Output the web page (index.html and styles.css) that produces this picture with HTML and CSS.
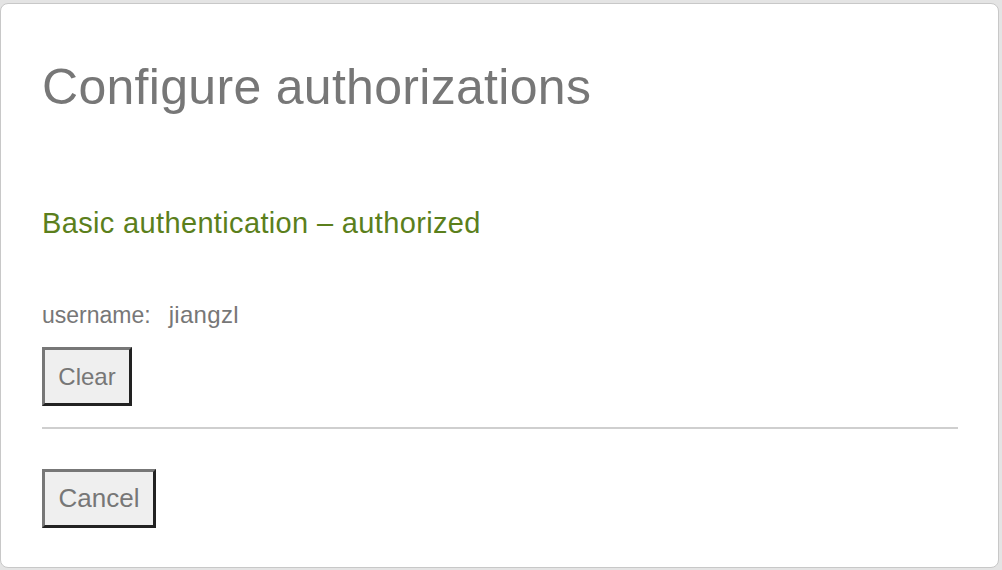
FILE: index.html
```html
<!DOCTYPE html>
<html lang="en">
<head>
<meta charset="utf-8">
<title>Configure authorizations</title>
<link rel="stylesheet" href="styles.css">
</head>
<body>
<div class="modal">
  <h2 class="title">Configure authorizations</h2>
  <h4 class="auth-name">Basic authentication – authorized</h4>
  <div class="field"><span class="label">username:</span><span class="value">jiangzl</span></div>
  <div class="actions">
    <button class="btn btn-clear" type="button">Clear</button>
  </div>
  <hr class="divider">
  <div class="actions">
    <button class="btn btn-cancel" type="button">Cancel</button>
  </div>
</div>
</body>
</html>
```
FILE: styles.css
```css
html, body {
  margin: 0;
  padding: 0;
}
body {
  background: #e4e4e4;
  height: 570px;
  padding-top: 3px;
  box-sizing: border-box;
  font-family: "Liberation Sans", Arial, sans-serif;
  color: #777;
}
.modal {
  box-sizing: border-box;
  height: 565px;
  margin: 0 3px 2px 0;
  background: #fff;
  border: 1px solid #c8c8c8;
  border-radius: 8px;
  padding: 53px 40px 0 41px;
}
.title {
  margin: 0;
  font-size: 50px;
  line-height: 60px;
  font-weight: normal;
  color: #777;
  letter-spacing: 0.3px;
}
.auth-name {
  margin: 88px 0 0;
  font-size: 29px;
  line-height: 36px;
  font-weight: normal;
  color: #5b7f1c;
  letter-spacing: 0.35px;
}
.field {
  margin-top: 60px;
  font-size: 23px;
  line-height: 28px;
  color: #777;
}
.field .value {
  margin-left: 18px;
  font-size: 24px;
  letter-spacing: 0.3px;
}
.actions {
  display: flex;
}
.field + .actions {
  margin-top: 18px;
}
.btn {
  box-sizing: border-box;
  height: 59px;
  border-style: solid;
  border-width: 3px;
  border-color: #777 #222 #222 #777;
  background: #efefef;
  color: #777;
  font-family: "Liberation Sans", Arial, sans-serif;
  padding: 0;
}
.btn-clear {
  width: 90px;
  font-size: 24px;
}
.btn-cancel {
  width: 114px;
  font-size: 26px;
}
.divider {
  margin: 21px 0 40px;
  border: 0;
  height: 2px;
  background: #cfcfcf;
}
```
